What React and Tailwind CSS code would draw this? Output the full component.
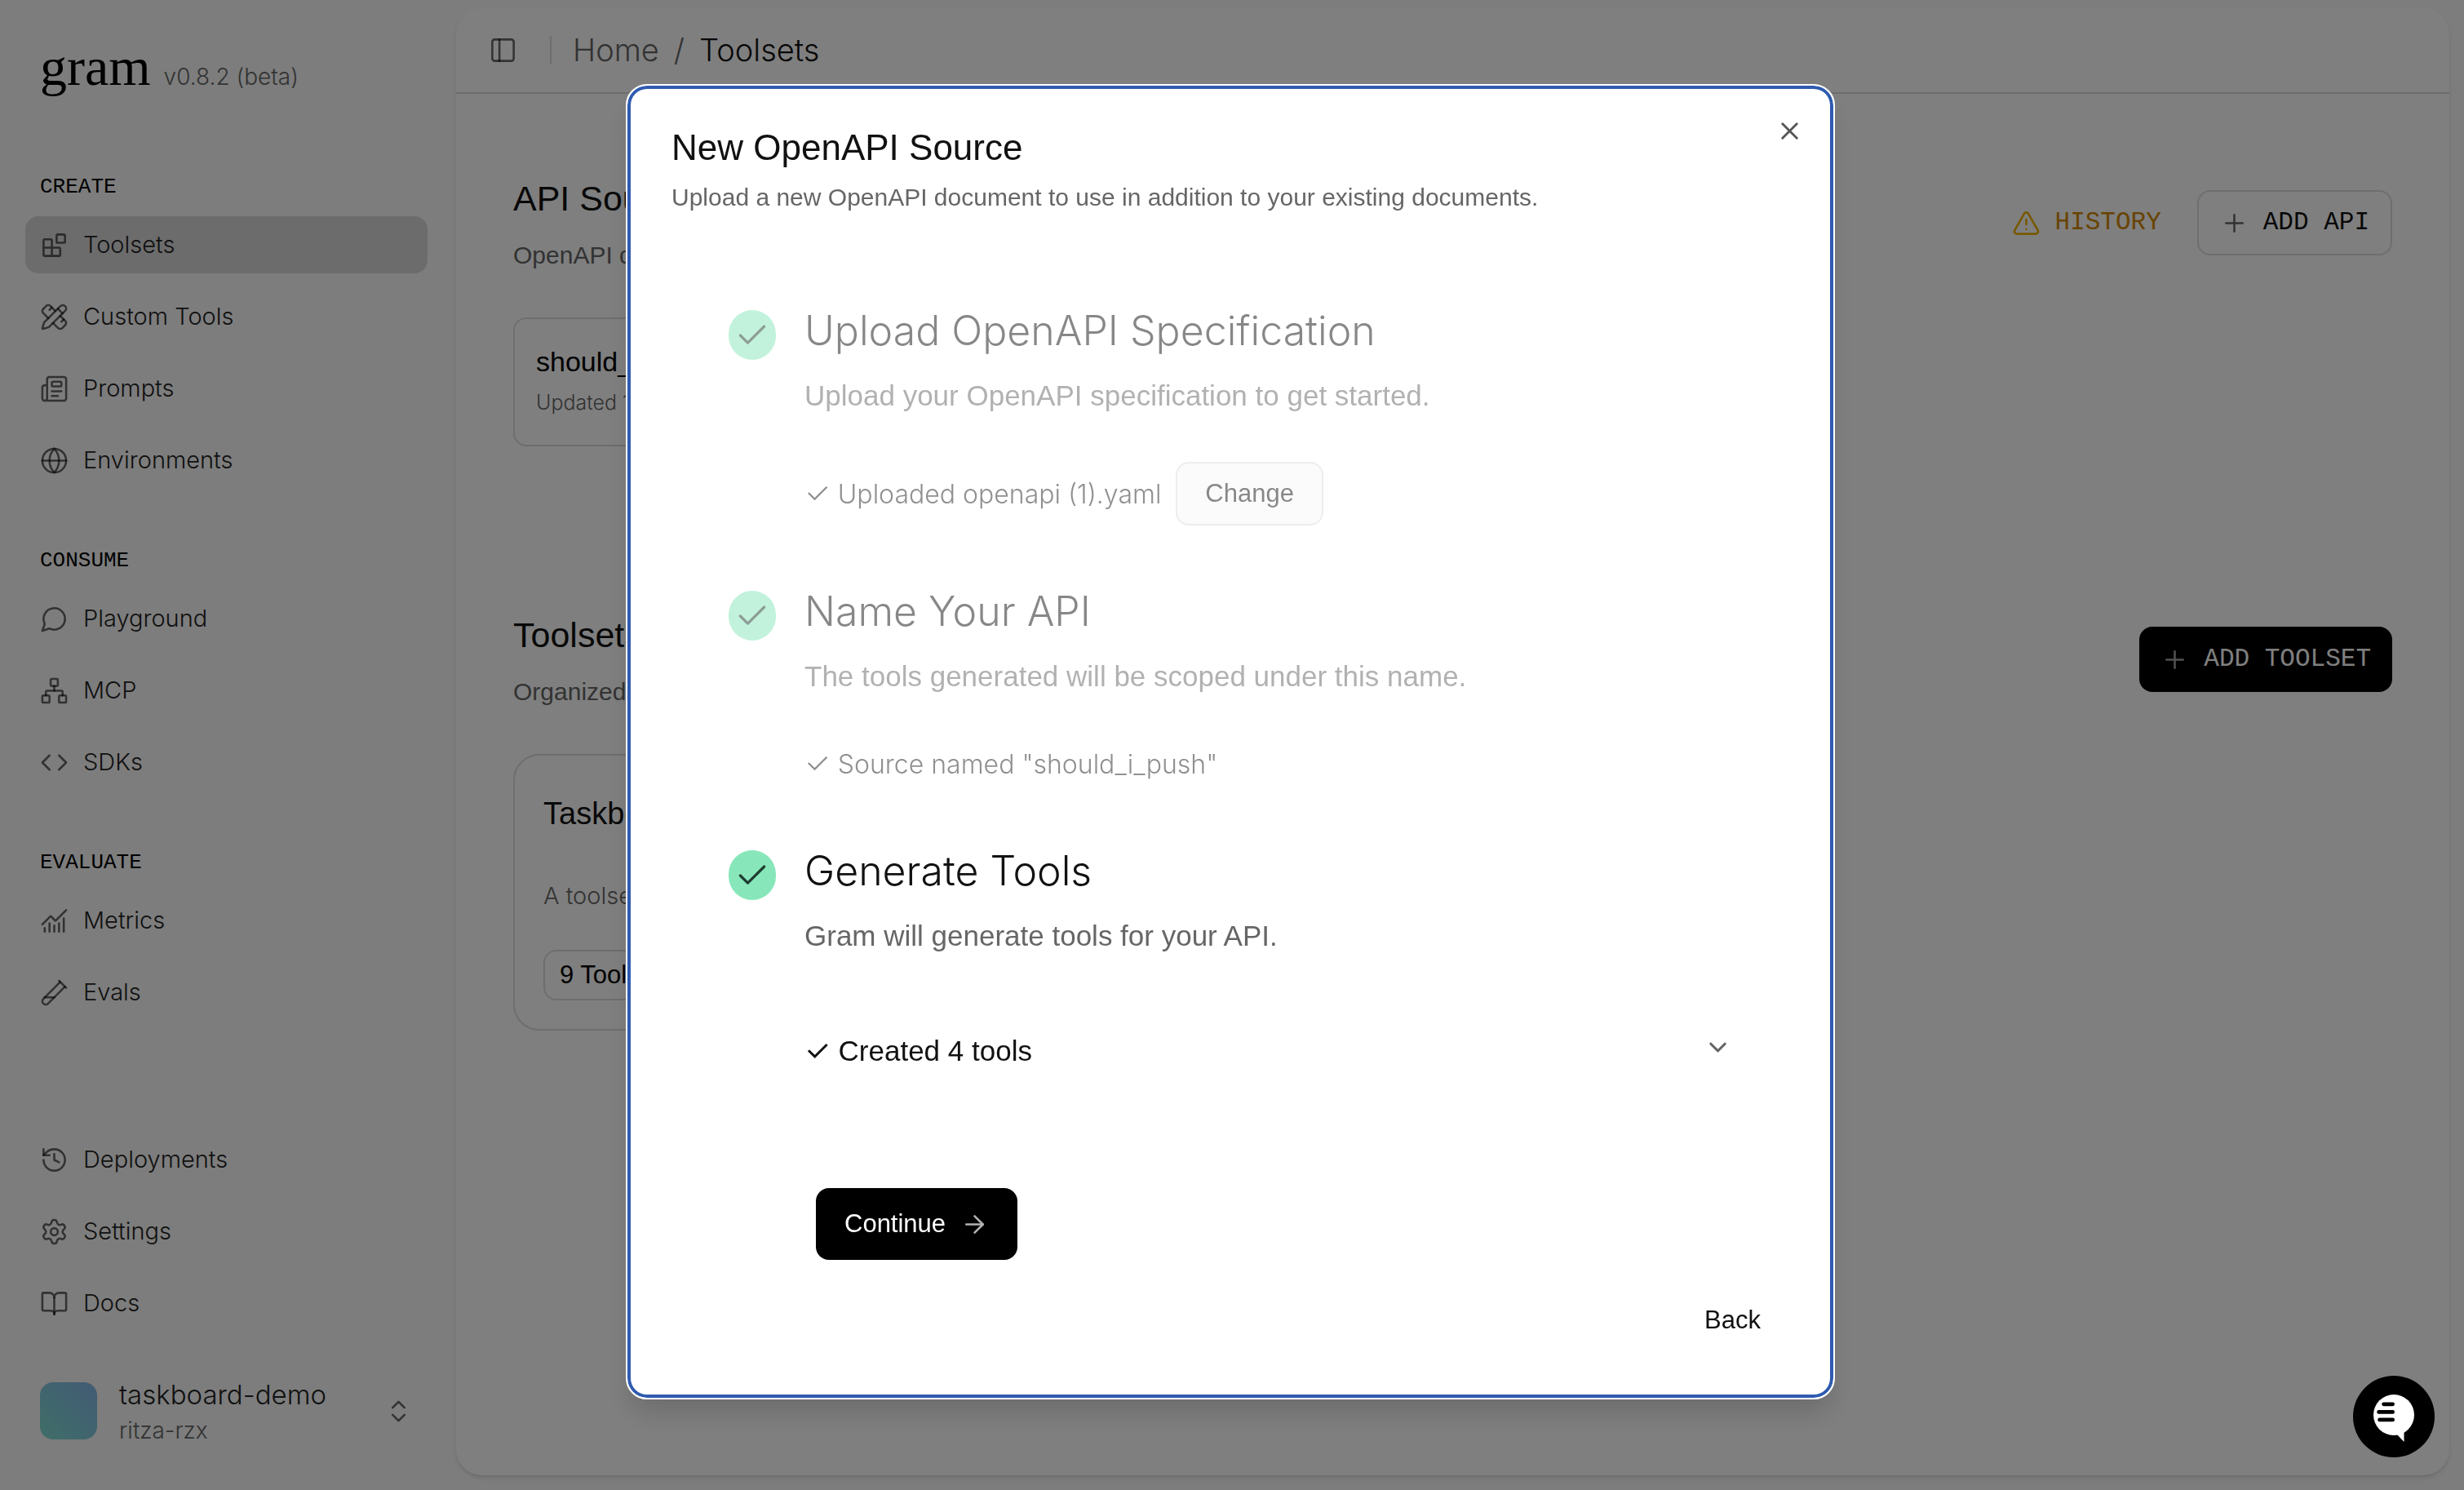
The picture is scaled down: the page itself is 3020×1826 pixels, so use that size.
import React from "react";
import {
  ArrowRight,
  BookOpen,
  ChartNoAxesCombined,
  Check,
  ChevronDown,
  ChevronsUpDown,
  Code,
  Globe,
  History,
  Network,
  Newspaper,
  PanelLeft,
  PencilRuler,
  Plus,
  Settings,
  TestTubeDiagonal,
  TriangleAlert,
  X,
} from "lucide-react";

const LIGHT = "font-['Inter',sans-serif] font-light";
const SANS = "font-['Liberation_Sans',Arial,sans-serif]";
const MONO = "font-['Liberation_Mono',monospace]";

function StrokeIcon({ children, className, strokeWidth = 1.75 }) {
  return (
    <svg
      viewBox="0 0 24 24"
      fill="none"
      stroke="currentColor"
      strokeWidth={strokeWidth}
      strokeLinecap="round"
      strokeLinejoin="round"
      className={className}
      aria-hidden="true"
    >
      {children}
    </svg>
  );
}

function Blocks(props) {
  return (
    <StrokeIcon {...props}>
      <rect width="7" height="7" x="14" y="3" rx="1" />
      <path d="M10 21V8a1 1 0 0 0-1-1H4a1 1 0 0 0-1 1v12a1 1 0 0 0 1 1h12a1 1 0 0 0 1-1v-5a1 1 0 0 0-1-1H3" />
    </StrokeIcon>
  );
}

function MessageCircle(props) {
  return (
    <StrokeIcon {...props}>
      <path d="M7.9 20A9 9 0 1 0 4 16.1L2 22Z" />
    </StrokeIcon>
  );
}

const groups = [
  {
    label: "CREATE",
    items: [
      { name: "Toolsets", icon: Blocks, active: true },
      { name: "Custom Tools", icon: PencilRuler },
      { name: "Prompts", icon: Newspaper },
      { name: "Environments", icon: Globe },
    ],
  },
  {
    label: "CONSUME",
    items: [
      { name: "Playground", icon: MessageCircle },
      { name: "MCP", icon: Network },
      { name: "SDKs", icon: Code },
    ],
  },
  {
    label: "EVALUATE",
    items: [
      { name: "Metrics", icon: ChartNoAxesCombined },
      { name: "Evals", icon: TestTubeDiagonal },
    ],
  },
];

const footerItems = [
  { name: "Deployments", icon: History },
  { name: "Settings", icon: Settings },
  { name: "Docs", icon: BookOpen },
];

function NavItem({ name, icon: Icon, active }) {
  return (
    <li>
      <a
        href="#"
        className={`flex h-[70px] items-center gap-[18px] rounded-2xl px-[18px] text-[29px] text-[#222222] ${LIGHT} ${
          active ? "bg-[#d9d9d9]" : ""
        }`}
      >
        <Icon className="size-[35px] text-black/60" strokeWidth={1.75} />
        {name}
      </a>
    </li>
  );
}

function Sidebar() {
  return (
    <aside className="flex w-[559px] shrink-0 flex-col pt-[47px] pr-[35px] pb-[55px] pl-[31px]">
      <div className="flex items-baseline gap-4 px-[18px]">
        <span className="font-['Liberation_Serif',serif] text-[66px] leading-[70px] text-black">gram</span>
        <span className={`text-[28px] text-[#666666] ${LIGHT}`}>v0.8.2 (beta)</span>
      </div>
      <nav className="mt-[76px] flex flex-col gap-[52px]">
        {groups.map((g) => (
          <section key={g.label}>
            <h2 className={`flex h-[72px] items-center px-[18px] text-[26px] text-black ${MONO}`}>{g.label}</h2>
            <ul className="flex flex-col gap-[18px]">
              {g.items.map((i) => (
                <NavItem key={i.name} {...i} />
              ))}
            </ul>
          </section>
        ))}
      </nav>
      <ul className="mt-auto flex flex-col gap-[18px]">
        {footerItems.map((i) => (
          <NavItem key={i.name} {...i} />
        ))}
      </ul>
      <button type="button" className="mt-[55px] flex items-center gap-[27px] px-[18px] text-left">
        <span className="size-[70px] rounded-2xl bg-linear-to-tr from-[#7fdcd0] to-[#84b6e8]" />
        <span className={`flex grow flex-col gap-1 ${LIGHT}`}>
          <span className="text-[33px] leading-[44px] text-[#222222]">taskboard-demo</span>
          <span className="text-[28px] leading-[36px] text-[#666666]">ritza-rzx</span>
        </span>
        <ChevronsUpDown className="size-[35px] text-black/60" strokeWidth={1.75} />
      </button>
    </aside>
  );
}

function SectionHeader({ title, text, children }) {
  return (
    <div className={`flex items-center justify-between ${SANS}`}>
      <div className="flex flex-col gap-7">
        <h2 className="text-[43px] leading-[48px] text-[#111111]">{title}</h2>
        <p className="text-[30px] leading-[36px] text-[#666666]">{text}</p>
      </div>
      <div className="flex gap-4 pb-1">{children}</div>
    </div>
  );
}

function Page() {
  return (
    <main className="mt-2.5 mr-[18px] mb-[18px] flex grow flex-col rounded-[32px] bg-white shadow-md">
      <header className="flex h-[105px] items-center border-b-2 border-[#dcdcdc] px-10">
        <button type="button" aria-label="Toggle sidebar">
          <PanelLeft className="size-[35px] text-black/60" strokeWidth={1.75} />
        </button>
        <span className="ml-10 h-[35px] w-0.5 bg-[#dcdcdc]" />
        <nav aria-label="Breadcrumb" className={`ml-[26px] flex gap-[18px] text-[38px] ${LIGHT}`}>
          <a href="#" className="text-[#666666]">Home</a>
          <span className="text-[#666666]">/</span>
          <span className="text-[#111111]">Toolsets</span>
        </nav>
      </header>

      <div className="px-[70px] pt-[104px]">
        <SectionHeader title="API Sources" text="OpenAPI documents providing tools for your toolsets">
          <button type="button" className={`flex h-20 items-center gap-[18px] px-7 text-[31px] text-[#d08700] ${MONO}`}>
            <TriangleAlert className="size-[35px] text-[#efb100]" strokeWidth={1.75} />
            HISTORY
          </button>
          <button
            type="button"
            className={`flex h-20 items-center gap-[18px] rounded-2xl border-2 border-[#dcdcdc] px-[26px] text-[31px] text-[#111111] ${MONO}`}
          >
            <Plus className="size-[35px] text-[#666666]" strokeWidth={1.75} />
            ADD API
          </button>
        </SectionHeader>

        <article className="mt-[58px] h-[158px] w-[700px] rounded-2xl border-2 border-[#dcdcdc] px-[26px] pt-[28px]">
          <h3 className={`text-[34px] leading-[48px] text-black ${SANS}`}>should_i_push</h3>
          <p className={`mt-2 text-[25px] leading-[36px] text-[#666666] ${LIGHT}`}>Updated 1 week ago</p>
        </article>

        <div className="mt-[207px]">
          <SectionHeader title="Toolsets" text="Organized collections of tools for your AI applications">
            <button
              type="button"
              className={`flex h-20 items-center gap-[18px] rounded-2xl bg-black px-[26px] text-[31px] text-white ${MONO}`}
            >
              <Plus className="size-[35px] text-[#a3a3a3]" strokeWidth={1.75} />
              ADD TOOLSET
            </button>
          </SectionHeader>
        </div>

        <article className="mt-[58px] w-[1100px] rounded-[32px] border-2 border-[#dcdcdc] p-[35px]">
          <h3 className={`mt-2 text-[38px] leading-[56px] text-[#111111] ${SANS}`}>Taskboard</h3>
          <p className={`mt-[53px] text-[29px] leading-[40px] text-[#666666] ${LIGHT}`}>A toolset for managing the taskboard</p>
          <span
            className={`mt-[46px] flex h-[62px] w-fit items-center rounded-2xl border-2 border-[#dcdcdc] px-[18px] text-[31px] text-black ${SANS}`}
          >
            9 Tools
          </span>
        </article>
      </div>
    </main>
  );
}

function Step({ title, text, done, children }) {
  return (
    <li className={`flex gap-[35px] ${done ? "opacity-50" : ""}`}>
      <span className="mt-[5px] flex h-[61px] w-[58px] shrink-0 items-center justify-center rounded-full bg-[#87e7ba]">
        <Check className="size-11 text-[#1f3d31]" strokeWidth={1.75} />
      </span>
      <div className="grow">
        <h3 className={`text-[50px] leading-[60px] text-[#111111] ${LIGHT}`}>{title}</h3>
        <p className={`mt-7 mb-[59px] text-[35px] leading-[44px] text-[#666666] ${SANS}`}>{text}</p>
        {children}
      </div>
    </li>
  );
}

function Dialog() {
  return (
    <div className="fixed inset-0 flex items-center justify-center bg-black/50 pr-1 pb-2">
      <div
        role="dialog"
        aria-labelledby="dialog-title"
        className="relative w-full max-w-[1482px] rounded-[26px] border-2 border-white bg-white px-[54px] pt-[52px] pb-14 shadow-[0_22px_33px_-6px_rgba(0,0,0,0.15)] inset-ring-4 inset-ring-[#2f5bb0]"
      >
        <button type="button" aria-label="Close" className="absolute top-[38px] right-9">
          <X className="size-[35px] text-[#555555]" strokeWidth={2} />
        </button>
        <h2 id="dialog-title" className={`text-[44px] leading-[48px] text-[#111111] ${SANS}`}>New OpenAPI Source</h2>
        <p className={`mt-[17px] text-[30px] leading-[40px] text-[#666666] ${SANS}`}>
          Upload a new OpenAPI document to use in addition to your existing documents.
        </p>

        <ol className="mt-[113px] flex flex-col gap-[75px] px-[70px]">
          <Step done title="Upload OpenAPI Specification" text="Upload your OpenAPI specification to get started.">
            <div className="flex items-center gap-[18px]">
              <p className={`text-[32px] leading-[50px] text-[#222222] ${LIGHT}`}>
                <span className="text-[36px]">✓</span> Uploaded openapi (1).yaml
              </p>
              <button
                type="button"
                className={`h-[78px] rounded-2xl border-2 border-[#dcdcdc] bg-[#f8f8f8] px-[34px] text-[31px] text-[#111111] ${SANS}`}
              >
                Change
              </button>
            </div>
          </Step>
          <Step done title="Name Your API" text="The tools generated will be scoped under this name.">
            <p className={`text-[32px] leading-[50px] text-[#222222] ${LIGHT}`}>
              <span className="text-[36px]">✓</span> Source named "should_i_push"
            </p>
          </Step>
          <Step title="Generate Tools" text="Gram will generate tools for your API.">
            <button
              type="button"
              className={`flex w-full items-start justify-between py-[34px] text-[35px] leading-[50px] text-[#111111] ${SANS}`}
            >
              <span>
                <span className="font-['Inter',sans-serif] text-[36px]">✓</span> Created 4 tools
              </span>
              <ChevronDown className="mt-1 size-[35px] text-[#666666]" strokeWidth={2} />
            </button>
          </Step>
        </ol>

        <button
          type="button"
          className={`mt-[109px] ml-[177px] flex h-[88px] items-center gap-[18px] rounded-2xl bg-black px-[35px] text-[31px] text-white ${SANS}`}
        >
          Continue
          <ArrowRight className="size-[35px] text-[#b3b3b3]" strokeWidth={1.75} />
        </button>
        <div className="mt-[35px] flex justify-end">
          <button type="button" className={`h-[78px] px-[35px] text-[31px] text-[#111111] ${SANS}`}>Back</button>
        </div>
      </div>
    </div>
  );
}

function ChatButton() {
  return (
    <button type="button" aria-label="Open chat" className="fixed right-9 bottom-10 size-[100px] rounded-full bg-black">
      <svg viewBox="0 0 100 100" className="size-full" aria-hidden="true">
        <circle cx="50" cy="48" r="25" fill="#fff" />
        <path d="M53 71 62.5 81V66Z" fill="#fff" />
        <g stroke="#000" strokeWidth="4.8" strokeLinecap="round">
          <path d="M37.6 34.8h11M31.6 44.4h17M32.6 53.9h16" />
        </g>
      </svg>
    </button>
  );
}

export default function App() {
  return (
    <div className="flex min-h-screen bg-[#fafafa]">
      <Sidebar />
      <Page />
      <Dialog />
      <ChatButton />
    </div>
  );
}
